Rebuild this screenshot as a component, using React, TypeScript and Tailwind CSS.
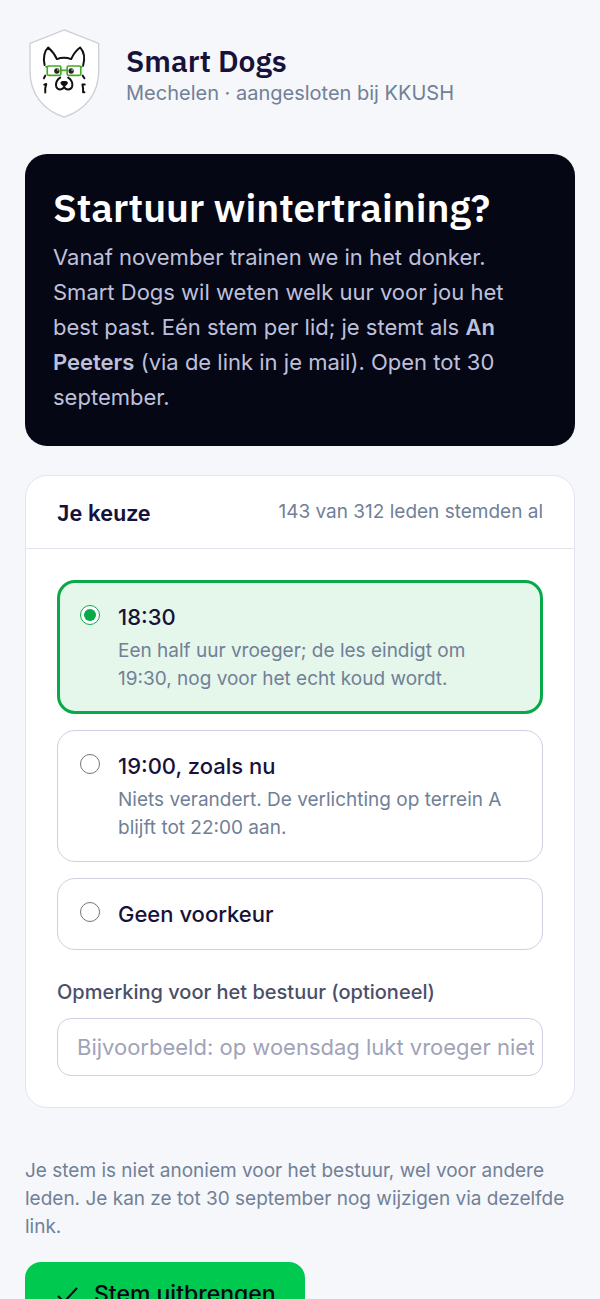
import React, { useState } from 'react';

const options = [
  { id: 'early', title: '18:30', description: 'Een half uur vroeger; de les eindigt om 19:30, nog voor het echt koud wordt.' },
  { id: 'current', title: '19:00, zoals nu', description: 'Niets verandert. De verlichting op terrein A blijft tot 22:00 aan.' },
  { id: 'none', title: 'Geen voorkeur' },
];

function Logo() {
  return (
    <svg viewBox="40 40 220 270" className="h-[90px] w-[73px] shrink-0" fill="none" aria-label="Smart Dogs" role="img">
      <path d="M149 45 L253 86 V169 C253 237 213 287 149 308 C85 287 46 237 46 169 V86 Z" fill="white" stroke="#cdced8" strokeWidth="4" />
      <g stroke="#111111" strokeWidth="6" strokeLinecap="round" strokeLinejoin="round">
        <path d="M90 151 C85 128 90 107 101 98 C112 108 121 119 127 133 C140 128 157 128 170 133 C177 118 187 105 197 98 C208 110 213 128 206 153" />
        <path d="M92 183 L88 191 M205 183 L210 191" />
        <path d="M89 210 L95 208 L92 221 V234 M211 210 H204 L206 221 V233 H210" />
        <path d="M137 189 C127 194 122 208 125 216 C130 228 145 226 149 217 C154 227 169 227 173 216 C176 207 171 194 161 189 M149 209 V217" />
      </g>
      <path d="M138 203 C140 198 158 198 160 203 C161 209 153 215 149 215 C145 215 137 209 138 203 Z" fill="#111111" />
      <circle cx="127" cy="169" r="8" fill="#222222" />
      <circle cx="170" cy="169" r="8" fill="#222222" />
      <circle cx="130" cy="166" r="2" fill="white" />
      <circle cx="173" cy="166" r="2" fill="white" />
      <g stroke="#43a925" strokeWidth="5">
        <rect x="98" y="154" width="41" height="28" rx="4" />
        <rect x="158" y="154" width="41" height="28" rx="4" />
        <path d="M139 167 H158 M98 157 L92 155 M199 157 L205 155" />
      </g>
    </svg>
  );
}

export default function App() {
  const [choice, setChoice] = useState('early');
  const [remark, setRemark] = useState('');

  return (
    <main className="min-h-screen bg-[#f5f7fb] px-[25px] pt-7 pb-10 font-['Inter',sans-serif] text-[#17123a]">
      <header className="flex items-center gap-[25px] pl-[3px]">
        <Logo />
        <div className="pt-1">
          <p className="font-['IBM_Plex_Sans','Roboto',sans-serif] text-[30px] leading-9 font-semibold">Smart Dogs</p>
          <p className="text-[20px] leading-7 text-[#718096]">Mechelen · aangesloten bij KKUSH</p>
        </div>
      </header>

      <section className="mt-9 rounded-[22px] bg-[#050714] px-7 pt-[30px] pb-[31px]">
        <h1 className="font-['IBM_Plex_Sans','Roboto',sans-serif] text-[39px] leading-12 font-semibold text-white">Startuur wintertraining?</h1>
        <p className="mt-2 text-[22px] leading-[35px] text-[#bfc0dc]">
          Vanaf november trainen we in het donker. Smart Dogs wil weten welk uur voor jou het best past. Eén stem per
          lid; je stemt als <strong className="font-semibold">An Peeters</strong> (via de link in je mail). Open tot 30
          september.
        </p>
      </section>

      <form onSubmit={(e) => e.preventDefault()}>
        <section className="mt-[29px] rounded-[22px] border border-[#e2e4ef] bg-white">
          <div className="flex items-center justify-between border-b border-[#e2e4ef] px-[31px] py-5">
            <h2 className="font-['IBM_Plex_Sans','Roboto',sans-serif] text-[23px] leading-8 font-semibold">Je keuze</h2>
            <p className="text-[19px] leading-8 text-[#718096]">143 van 312 leden stemden al</p>
          </div>

          <div className="p-[31px]">
            <fieldset className="flex flex-col gap-4" aria-label="Je keuze">
              {options.map((option) => (
                <label
                  key={option.id}
                  className={`flex items-start gap-[18px] rounded-[18px] ${
                    choice === option.id
                      ? 'border-3 border-[#08a948] bg-[#e5f6eb] px-5 py-[18px]'
                      : 'border border-[#d0d0e2] bg-white px-[22px] py-[19px]'
                  }`}
                >
                  <input
                    type="radio"
                    name="start"
                    value={option.id}
                    checked={choice === option.id}
                    onChange={() => setChoice(option.id)}
                    className="mt-1 size-5 shrink-0 accent-[#08a948]"
                  />
                  <span>
                    <span className="block text-[22px] leading-8 font-medium">{option.title}</span>
                    {option.description && (
                      <span className="mt-1 block text-[19px] leading-7 text-[#718096]">{option.description}</span>
                    )}
                  </span>
                </label>
              ))}
            </fieldset>

            <label htmlFor="remark" className="mt-[26px] block text-[20px] leading-8 font-medium text-[#4a4f68]">
              Opmerking voor het bestuur (optioneel)
            </label>
            <input
              id="remark"
              type="text"
              value={remark}
              onChange={(e) => setRemark(e.target.value)}
              placeholder="Bijvoorbeeld: op woensdag lukt vroeger niet"
              className="mt-[10px] block h-[58px] w-full rounded-[14px] border border-[#d0d0e2] bg-white pr-2 pl-[19px] text-[22px] placeholder:text-[#a0a3b8]"
            />
          </div>
        </section>

        <p className="mt-[49px] text-[19px] leading-7 text-[#718096]">
          Je stem is niet anoniem voor het bestuur, wel voor andere leden. Je kan ze tot 30 september nog wijzigen via
          dezelfde link.
        </p>
        <button type="submit" className="mt-[21px] flex h-16 items-center gap-4 rounded-2xl bg-[#00c950] px-[29px] text-[23px] font-medium text-[#050714]">
          <svg viewBox="0 0 24 24" className="size-6" fill="none" stroke="currentColor" strokeWidth="2" aria-hidden="true">
            <path d="M4 14 L10 20 L23 6" />
          </svg>
          Stem uitbrengen
        </button>
      </form>
    </main>
  );
}
